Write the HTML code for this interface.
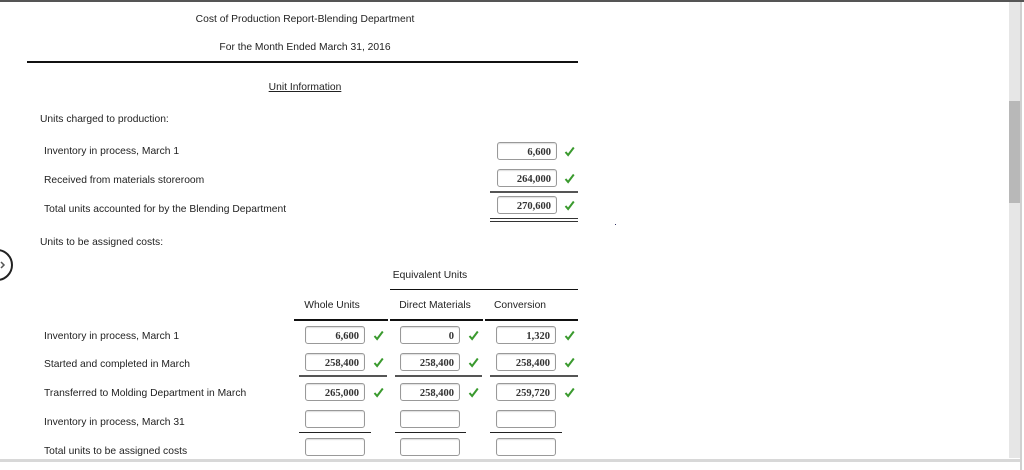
<!DOCTYPE html>
<html><head><style>
body{margin:0;width:1024px;height:470px;position:relative;background:#fff;overflow:hidden;font-family:"Liberation Sans",sans-serif;font-size:10.3px;color:#222}
.t{position:absolute;white-space:nowrap;line-height:12px;margin-top:1px}
.c{transform:translateX(-50%)}
.l{position:absolute}
.in{position:absolute;width:58px;height:16px;border:1px solid #999;border-radius:3px;box-shadow:inset 0 1px 1px #ddd;font:bold 10.5px "Liberation Serif",serif;text-align:right;line-height:19px;box-sizing:content-box;color:#333}
.in span{padding-right:5px}
.ck{position:absolute;width:11px;height:11px}
</style></head><body>
<svg width="0" height="0" style="position:absolute"><defs><symbol id="k" viewBox="0 0 11 11"><path d="M1.5 6l2.6 3L9.8 1.5" fill="none" stroke="#3a9a2e" stroke-width="2"/></symbol></defs></svg>
<div class="l" style="left:0;top:0;width:1024px;height:2px;background:#555"></div>
<div class="t c" style="left:305px;top:13px">Cost of Production Report-Blending Department</div>
<div class="t c" style="left:305px;top:41px">For the Month Ended March 31, 2016</div>
<div class="l" style="left:27px;top:61px;width:551px;height:2px;background:#111"></div>
<div class="t c" style="left:305px;top:81px;text-decoration:underline">Unit Information</div>
<div class="t" style="left:40px;top:113px">Units charged to production:</div>
<div class="t" style="left:44px;top:145px">Inventory in process, March 1</div>
<div class="t" style="left:44px;top:174px">Received from materials storeroom</div>
<div class="t" style="left:44px;top:203px">Total units accounted for by the Blending Department</div>
<div class="in" style="left:497px;top:142px"><span>6,600</span></div><svg class="ck" style="left:564px;top:146px"><use href="#k"/></svg>
<div class="in" style="left:497px;top:169px"><span>264,000</span></div><svg class="ck" style="left:564px;top:173px"><use href="#k"/></svg>
<div class="l" style="left:490px;top:191px;width:88px;height:2px;background:#555"></div>
<div class="in" style="left:497px;top:196px"><span>270,600</span></div><svg class="ck" style="left:564px;top:200px"><use href="#k"/></svg>
<div class="l" style="left:490px;top:218px;width:88px;height:1px;background:#333"></div>
<div class="l" style="left:490px;top:221px;width:88px;height:1px;background:#333"></div>
<div class="l" style="left:615px;top:224px;width:1px;height:1px;background:#336"></div>
<svg class="l" style="left:0;top:248px" width="22" height="36"><circle cx="-3" cy="17" r="15" fill="none" stroke="#222" stroke-width="2"/><path d="M1 14l3 3-3 3" fill="none" stroke="#555" stroke-width="1.5"/></svg>
<div class="t" style="left:40px;top:236px">Units to be assigned costs:</div>
<div class="t c" style="left:430px;top:269px">Equivalent Units</div>
<div class="l" style="left:390px;top:289px;width:188px;height:1px;background:#111"></div>
<div class="t c" style="left:332px;top:299px">Whole Units</div>
<div class="t c" style="left:435px;top:299px">Direct Materials</div>
<div class="t c" style="left:520px;top:299px">Conversion</div>
<div class="l" style="left:294px;top:319px;width:94px;height:2px;background:#111"></div>
<div class="l" style="left:390px;top:319px;width:93px;height:2px;background:#111"></div>
<div class="l" style="left:485px;top:319px;width:93px;height:2px;background:#111"></div>
<div class="t" style="left:44px;top:330px">Inventory in process, March 1</div>
<div class="t" style="left:44px;top:358px">Started and completed in March</div>
<div class="t" style="left:44px;top:387px">Transferred to Molding Department in March</div>
<div class="t" style="left:44px;top:416px">Inventory in process, March 31</div>
<div class="t" style="left:44px;top:445px">Total units to be assigned costs</div>

<div class="in" style="left:305px;top:326px"><span>6,600</span></div><svg class="ck" style="left:373px;top:330px"><use href="#k"/></svg>
<div class="in" style="left:400px;top:326px"><span>0</span></div><svg class="ck" style="left:468px;top:330px"><use href="#k"/></svg>
<div class="in" style="left:496px;top:326px"><span>1,320</span></div><svg class="ck" style="left:564px;top:330px"><use href="#k"/></svg>

<div class="in" style="left:305px;top:353px"><span>258,400</span></div><svg class="ck" style="left:373px;top:357px"><use href="#k"/></svg>
<div class="in" style="left:400px;top:353px"><span>258,400</span></div><svg class="ck" style="left:468px;top:357px"><use href="#k"/></svg>
<div class="in" style="left:496px;top:353px"><span>258,400</span></div><svg class="ck" style="left:564px;top:357px"><use href="#k"/></svg>

<div class="l" style="left:299px;top:375px;width:88px;height:2px;background:#555"></div>
<div class="l" style="left:395px;top:375px;width:87px;height:2px;background:#555"></div>
<div class="l" style="left:490px;top:375px;width:88px;height:2px;background:#555"></div>

<div class="in" style="left:305px;top:383px"><span>265,000</span></div><svg class="ck" style="left:373px;top:387px"><use href="#k"/></svg>
<div class="in" style="left:400px;top:383px"><span>258,400</span></div><svg class="ck" style="left:468px;top:387px"><use href="#k"/></svg>
<div class="in" style="left:496px;top:383px"><span>259,720</span></div><svg class="ck" style="left:564px;top:387px"><use href="#k"/></svg>

<div class="in" style="left:305px;top:410px"></div>
<div class="in" style="left:400px;top:410px"></div>
<div class="in" style="left:496px;top:410px"></div>
<div class="l" style="left:299px;top:432px;width:72px;height:1px;background:#222"></div>
<div class="l" style="left:395px;top:432px;width:71px;height:1px;background:#222"></div>
<div class="l" style="left:490px;top:432px;width:72px;height:1px;background:#222"></div>
<div class="in" style="left:305px;top:438px"></div>
<div class="in" style="left:400px;top:438px"></div>
<div class="in" style="left:496px;top:438px"></div>

<div class="l" style="left:0;top:459px;width:1020px;height:3px;background:#d8d8d8"></div>
<div class="l" style="left:1009px;top:2px;width:11px;height:456px;background:#e6e6e6"></div>
<div class="l" style="left:1009px;top:101px;width:11px;height:102px;background:#b8b8b8"></div>
<div class="l" style="left:1020px;top:2px;width:2px;height:468px;background:#d0d0d0"></div>
</body></html>
